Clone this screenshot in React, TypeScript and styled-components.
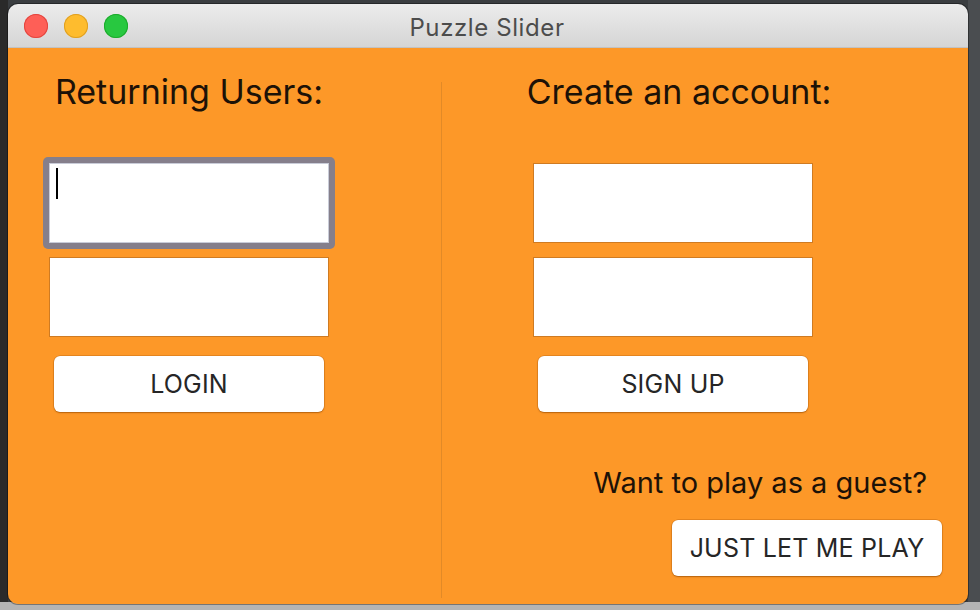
import React from "react";
import styled, { createGlobalStyle } from "styled-components";

const GlobalStyle = createGlobalStyle`
  html, body {
    margin: 0;
    padding: 0;
    width: 980px;
    height: 610px;
    overflow: hidden;
    background: #3c3f42;
    font-family: "Inter", "Liberation Sans", sans-serif;
  }
  * { box-sizing: border-box; }
`;

const Desktop = styled.div`
  width: 980px;
  height: 610px;
  padding: 4px 12px 6px 8px;
  background:
    linear-gradient(to bottom, transparent 602px, #b4b4b4 602px),
    linear-gradient(to right, #2a2a2a 8px, #3a3d40 8px, #3a3d40 968px, #4a4d50 968px);
`;

const Window = styled.div`
  width: 960px;
  height: 600px;
  display: flex;
  flex-direction: column;
  border-radius: 10px;
  overflow: hidden;
  box-shadow: 0 0 0 1px rgba(0, 0, 0, 0.35);
`;

const TitleBar = styled.div`
  height: 44px;
  flex: none;
  display: grid;
  grid-template-columns: 1fr auto 1fr;
  align-items: center;
  padding: 0 16px;
  background: linear-gradient(to bottom, #ececec, #d5d5d5);
  border-bottom: 1px solid #c2c2c2;
`;

const Lights = styled.div`
  display: flex;
  gap: 16px;
  align-items: center;
`;

const Light = styled.span<{ $fill: string; $edge: string }>`
  width: 24px;
  height: 24px;
  border-radius: 50%;
  background: ${(p) => p.$fill};
  box-shadow: inset 0 0 0 1px ${(p) => p.$edge};
`;

const Title = styled.div`
  font-size: 24px;
  line-height: 30px;
  padding-top: 4px;
  padding-right: 2px;
  color: #4c4c4c;
  letter-spacing: 0.6px;
`;

const Content = styled.div`
  flex: 1;
  display: flex;
  background: #fd9828;
`;

const Panel = styled.div<{ $width?: number; $padLeft: number }>`
  ${(p) => (p.$width ? `width: ${p.$width}px; flex: none;` : "flex: 1;")}
  display: flex;
  flex-direction: column;
  padding: 24px 26px 28px ${(p) => p.$padLeft}px;
`;

const Column = styled.div`
  width: 280px;
  display: flex;
  flex-direction: column;
  align-items: center;
`;

const Heading = styled.h2<{ $shift?: number }>`
  margin: 0 0 0 ${(p) => p.$shift ?? 0}px;
  font-size: 34px;
  line-height: 40px;
  font-weight: 400;
  color: #1d1207;
  white-space: nowrap;
`;

const Fields = styled.div`
  margin-top: 51px;
  display: flex;
  flex-direction: column;
  gap: 14px;
  width: 280px;
`;

const FieldWrap = styled.div`
  position: relative;
  width: 280px;
  height: 80px;
`;

const FocusRing = styled.div`
  position: absolute;
  inset: -6px;
  border-radius: 5px;
  background: #857f8b;
`;

const Input = styled.input<{ $focused?: boolean }>`
  position: relative;
  display: block;
  width: 280px;
  height: 80px;
  margin: 0;
  padding: 0 8px;
  background: #fff;
  border: 1px solid ${(p) => (p.$focused ? "#c9ccd8" : "#cf7b22")};
  border-radius: 0;
  outline: none;
  font: inherit;
`;

const Caret = styled.span`
  position: absolute;
  left: 7px;
  top: 5px;
  width: 2px;
  height: 31px;
  background: #000;
`;

const Button = styled.button<{ $mt?: number }>`
  margin-top: ${(p) => p.$mt ?? 0}px;
  width: 270px;
  height: 56px;
  flex: none;
  border: none;
  border-radius: 6px;
  background: #fff;
  box-shadow: 0 0 0 0.5px rgba(170, 90, 10, 0.55), 0 1px 1.5px rgba(150, 75, 0, 0.6);
  font-family: "Inter", "Liberation Sans", sans-serif;
  font-size: 25px;
  color: #262626;
  letter-spacing: 0.2px;
  padding: 0;
`;

const Divider = styled.div`
  width: 1px;
  flex: none;
  margin: 34px 0 6px;
  background: #e28a27;
`;

const Spacer = styled.div`
  flex: 1;
`;

const Guest = styled.div`
  display: flex;
  flex-direction: column;
  align-items: flex-end;
`;

const GuestText = styled.p`
  margin: 0 15px 20px 0;
  font-size: 29px;
  line-height: 34px;
  color: #1d1207;
  white-space: nowrap;
`;

export default function App() {
  return (
    <>
      <GlobalStyle />
      <Desktop>
        <Window>
          <TitleBar>
            <Lights>
              <Light $fill="#fe5f57" $edge="#e2463f" />
              <Light $fill="#febc2e" $edge="#dfa023" />
              <Light $fill="#28c840" $edge="#1daa2c" />
            </Lights>
            <Title>Puzzle Slider</Title>
            <span />
          </TitleBar>
          <Content>
            <Panel $width={433} $padLeft={41}>
              <Column>
                <Heading>Returning Users:</Heading>
                <Fields>
                  <FieldWrap>
                    <FocusRing />
                    <Input $focused readOnly />
                    <Caret />
                  </FieldWrap>
                  <FieldWrap>
                    <Input readOnly />
                  </FieldWrap>
                </Fields>
                <Button $mt={19}>LOGIN</Button>
              </Column>
            </Panel>
            <Divider />
            <Panel $padLeft={91}>
              <Column>
                <Heading $shift={12}>Create an account:</Heading>
                <Fields>
                  <FieldWrap>
                    <Input readOnly />
                  </FieldWrap>
                  <FieldWrap>
                    <Input readOnly />
                  </FieldWrap>
                </Fields>
                <Button $mt={19}>SIGN UP</Button>
              </Column>
              <Spacer />
              <Guest>
                <GuestText>Want to play as a guest?</GuestText>
                <Button>JUST LET ME PLAY</Button>
              </Guest>
            </Panel>
          </Content>
        </Window>
      </Desktop>
    </>
  );
}
